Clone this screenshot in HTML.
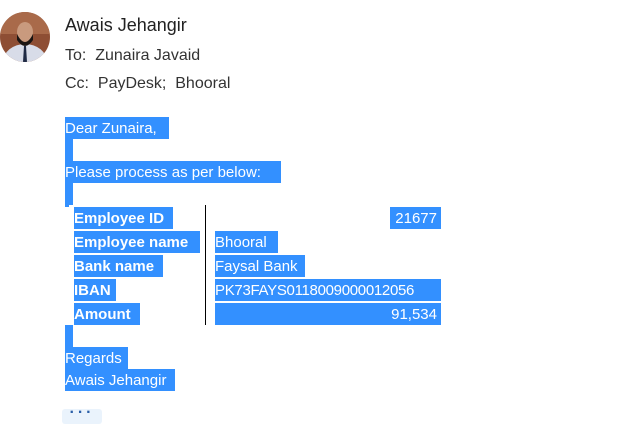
<!DOCTYPE html>
<html><head><style>
body{margin:0;width:621px;height:428px;background:#fff;font-family:"Liberation Sans",sans-serif;position:relative;overflow:hidden}
.a{position:absolute;white-space:nowrap}
.h{position:absolute;background:#3390ff;color:#fff;font-size:15px;line-height:23px;height:22px;white-space:nowrap;box-sizing:border-box;overflow:hidden}
.b{font-weight:bold}
.r{text-align:right;padding-right:4px}
</style></head><body>
<svg class="a" style="left:0;top:12px" width="50" height="50" viewBox="0 0 50 50">
<defs><clipPath id="c"><circle cx="25" cy="25" r="25"/></clipPath></defs>
<g clip-path="url(#c)">
<rect width="50" height="50" fill="#8e4e34"/>
<rect x="0" y="0" width="50" height="22" fill="#a96a4a"/>
<ellipse cx="25" cy="50" rx="22" ry="18" fill="#d8dce8"/>
<ellipse cx="25" cy="20" rx="8" ry="10" fill="#c99a7e"/>
<path d="M17 22 Q25 38 33 22 L33 28 Q25 40 17 28Z" fill="#1a1412"/>
<path d="M24 34 L26 34 L27 50 L23 50Z" fill="#1f2a44"/>
</g></svg>
<div class="a" style="left:65px;top:15px;font-size:18px;color:#222">Awais Jehangir</div>
<div class="a" style="left:65px;top:47px;font-size:16px;color:#333">To:&nbsp; Zunaira Javaid</div>
<div class="a" style="left:65px;top:75px;font-size:16px;color:#333">Cc:&nbsp; PayDesk;&nbsp; Bhooral</div>

<div class="h" style="left:65px;top:117px;width:104px">Dear Zunaira,</div>
<div class="h" style="left:65px;top:139px;width:8px"></div>
<div class="h" style="left:65px;top:161px;width:216px">Please process as per below:</div>
<div class="h" style="left:65px;top:183px;width:8px"></div>
<div class="h" style="left:65px;top:205px;width:4px;height:2px"></div>

<div class="h b" style="left:74px;top:207px;width:99px">Employee ID</div>
<div class="h b" style="left:74px;top:231px;width:126px">Employee name</div>
<div class="h b" style="left:74px;top:255px;width:89px">Bank name</div>
<div class="h b" style="left:74px;top:279px;width:42px">IBAN</div>
<div class="h b" style="left:74px;top:303px;width:66px">Amount</div>
<div class="a" style="left:205px;top:205px;width:1px;height:120px;background:#000"></div>
<div class="h r" style="left:390px;top:207px;width:51px">21677</div>
<div class="h" style="left:215px;top:231px;width:63px">Bhooral</div>
<div class="h" style="left:215px;top:255px;width:90px">Faysal Bank</div>
<div class="h" style="left:215px;top:279px;width:226px;letter-spacing:-0.3px">PK73FAYS0118009000012056</div>
<div class="h r" style="left:215px;top:303px;width:226px">91,534</div>

<div class="h" style="left:65px;top:325px;width:8px"></div>
<div class="h" style="left:65px;top:347px;width:63px">Regards</div>
<div class="h" style="left:65px;top:369px;width:110px">Awais Jehangir</div>
<div class="a" style="left:62px;top:409px;width:40px;height:15px;background:#eaf3fc;border-radius:3px;color:#2a5fa8;font-size:16px;font-weight:bold;line-height:8px;text-align:center;letter-spacing:3px">···</div>
</body></html>
